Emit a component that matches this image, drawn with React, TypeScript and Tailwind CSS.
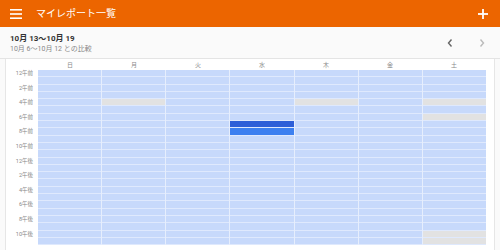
import React from "react";

const days = ["日", "月", "火", "水", "木", "金", "土"];
const labels = ["12午前", "2午前", "4午前", "6午前", "8午前", "10午前", "12午後", "2午後", "4午後", "6午後", "8午後", "10午後"];

function cellColor(d: number, h: number): string {
  if (d === 3 && h === 7) return "bg-[#2e5fd8]";
  if (d === 3 && h === 8) return "bg-[#3d80f0]";
  if ((d === 1 || d === 4 || d === 6) && h === 4) return "bg-[#e2e2e2]";
  if (d === 6 && (h === 6 || h === 22 || h === 23)) return "bg-[#e2e2e2]";
  return "bg-[#c7d9fb]";
}

export default function App() {
  const hours = Array.from({ length: 24 }, (_, i) => i);
  return (
    <div className="w-[500px] h-[250px] overflow-hidden bg-[#fafafa] font-['Roboto','Noto_Sans_CJK_JP',sans-serif]">
      <div className="h-[27px] bg-[#ec6500] flex items-center px-[10px] text-white">
        <svg width="12" height="10" viewBox="0 0 12 10" className="shrink-0">
          <rect x="0" y="0" width="12" height="1.6" fill="white" />
          <rect x="0" y="4.2" width="12" height="1.6" fill="white" />
          <rect x="0" y="8.4" width="12" height="1.6" fill="white" />
        </svg>
        <div className="ml-[14px] text-[10px] leading-none">マイレポート一覧</div>
        <div className="flex-1" />
        <svg width="10" height="10" viewBox="0 0 10 10" className="mr-[2px]">
          <rect x="4.1" y="0" width="1.8" height="10" fill="white" />
          <rect x="0" y="4.1" width="10" height="1.8" fill="white" />
        </svg>
      </div>
      <div className="h-[32px] bg-[#fafafa] border-b border-[#e4e4e4] flex items-center pl-[10px] pr-[14px]">
        <div className="flex flex-col pt-[2px]">
          <div className="text-[8px] font-bold text-[#333] leading-[10px]">10月 13〜10月 19</div>
          <div className="text-[7px] text-[#888] leading-[10px]">10月 6〜10月 12 との比較</div>
        </div>
        <div className="flex-1" />
        <svg width="8" height="10" viewBox="0 0 8 10" className="mr-[24px]">
          <path d="M5.5 1.5 L2.5 5 L5.5 8.5" stroke="#666" strokeWidth="1.4" fill="none" />
        </svg>
        <svg width="8" height="10" viewBox="0 0 8 10">
          <path d="M2.5 1.5 L5.5 5 L2.5 8.5" stroke="#bbb" strokeWidth="1.4" fill="none" />
        </svg>
      </div>
      <div className="mx-[5px] h-[200px] bg-white border-x border-[#e6e6e6] flex pr-[8px]">
        <div className="w-[32px] shrink-0 flex flex-col pt-[11px] pr-[5px]">
          {hours.map((h) => (
            <div key={h} className="h-[7.3px] relative">
              {h % 2 === 0 && (
                <div className="absolute right-0 top-[-1px] text-[5.5px] leading-[9px] text-[#888] whitespace-nowrap">
                  {labels[h / 2]}
                </div>
              )}
            </div>
          ))}
        </div>
        <div className="flex-1 flex flex-col">
          <div className="h-[11px] flex">
            {days.map((d) => (
              <div key={d} className="flex-1 text-center text-[6px] leading-[11px] text-[#888]">
                {d}
              </div>
            ))}
          </div>
          <div className="h-[175px] flex gap-px bg-[#e6eefd]">
            {days.map((d, di) => (
              <div key={d} className="flex-1 flex flex-col">
                {hours.map((h) => (
                  <div key={h} className="h-[7.3px] border-b border-[#dfe9fd] box-border">
                    <div className={`h-full ${cellColor(di, h)}`} />
                  </div>
                ))}
              </div>
            ))}
          </div>
        </div>
      </div>
    </div>
  );
}
